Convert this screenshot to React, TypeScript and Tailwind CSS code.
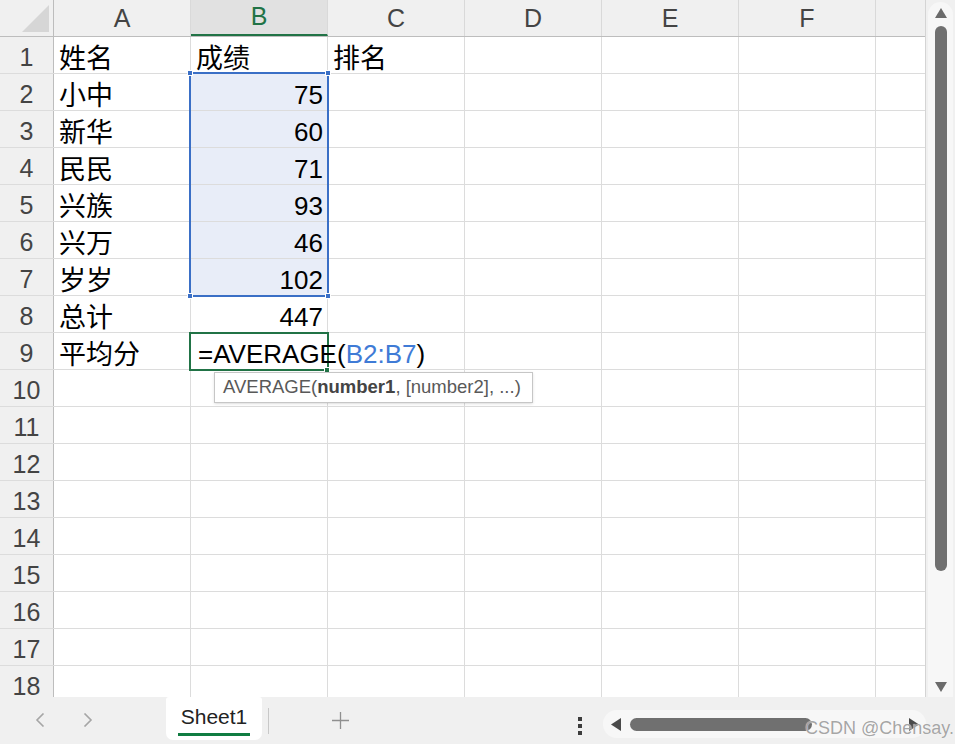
import React from 'react';

const FONT = "font-['Liberation_Sans','Noto_Sans_CJK_SC',sans-serif]";

type Row = [string, string, string];

const data: Row[] = [
  ['姓名', '成绩', '排名'],
  ['小中', '75', ''],
  ['新华', '60', ''],
  ['民民', '71', ''],
  ['兴族', '93', ''],
  ['兴万', '46', ''],
  ['岁岁', '102', ''],
  ['总计', '447', ''],
  ['平均分', '', ''],
];

const cols = ['A', 'B', 'C', 'D', 'E', 'F'];

const isNum = (s: string) => /^\d+$/.test(s);

const ColHeader = ({ label, active }: { label: string; active?: boolean }) => (
  <div
    className={`w-[137px] shrink-0 h-full flex items-end justify-center pb-[5px] leading-none text-[25px] border-r border-[#d9d9d9] ${
      active ? 'bg-[#e1e1e1] text-[#217346] border-b-2 border-b-[#217346]' : 'text-[#444]'
    }`}
  >
    {label}
  </div>
);

const Cell = ({ value, selected }: { value: string; selected?: boolean }) => (
  <div
    className={`w-[137px] shrink-0 h-full border-r border-[#dcdcdc] flex items-end leading-none text-black overflow-hidden ${
      isNum(value) ? 'justify-end pr-[4px] pb-[2px] text-[26px]' : 'pl-[5px] pb-0 text-[27px]'
    } ${selected ? 'bg-[#e8edf8]' : ''}`}
  >
    {value}
  </div>
);

const Grid = () => {
  const rows = Array.from({ length: 18 }, (_, i) => data[i] ?? ['', '', '']);
  return (
    <div className="relative w-[926px] h-full bg-white border-r border-[#d4d4d4] overflow-hidden">
      {/* column headers */}
      <div className="flex h-[37px] bg-[#f0f0f0] border-b border-[#bdbdbd]">
        <div className="w-[54px] shrink-0 h-full border-r border-[#bdbdbd] flex items-end justify-end">
          <svg width="30" height="30" viewBox="0 0 30 30" className="mb-[3px] mr-[3px]">
            <polygon points="29,2 29,29 2,29" fill="#d6d6d6" />
          </svg>
        </div>
        {cols.map((c) => (
          <ColHeader key={c} label={c} active={c === 'B'} />
        ))}
        <div className="flex-1 h-full" />
      </div>

      {/* rows */}
      {rows.map((r, i) => (
        <div key={i} className="flex h-[37px] border-b border-[#dcdcdc]">
          <div className="w-[54px] shrink-0 h-full bg-[#f0f0f0] border-r border-[#bdbdbd] flex items-end justify-center pb-[3px] leading-none text-[25px] text-[#444]">
            {i + 1}
          </div>
          <Cell value={r[0]} />
          {i === 8 ? (
            <div className="w-[137px] shrink-0 h-full border-r border-[#dcdcdc] flex items-end pb-[2px] pl-[7px] leading-none text-[26px] text-black">
              <span className="relative z-10 whitespace-nowrap">
                =AVERAGE(<span className="text-[#3f7bd6]">B2:B7</span>)
              </span>
            </div>
          ) : (
            <Cell value={r[1]} selected={i >= 1 && i <= 6} />
          )}
          <Cell value={r[2]} />
          <Cell value="" />
          <Cell value="" />
          <Cell value="" />
          <div className="flex-1 h-full" />
        </div>
      ))}

      {/* selection range B2:B7 */}
      <div className="absolute left-[189px] top-[72px] w-[140px] h-[225px] border-2 border-[#3a6fc6] pointer-events-none" />
      <div className="absolute left-[187px] top-[70px] w-[6px] h-[6px] bg-[#3a6fc6] border border-white" />
      <div className="absolute left-[325px] top-[70px] w-[6px] h-[6px] bg-[#3a6fc6] border border-white" />
      <div className="absolute left-[187px] top-[293px] w-[6px] h-[6px] bg-[#3a6fc6] border border-white" />
      <div className="absolute left-[325px] top-[293px] w-[6px] h-[6px] bg-[#3a6fc6] border border-white" />

      {/* active cell B9 */}
      <div className="absolute left-[189px] top-[332px] w-[140px] h-[39px] border-2 border-[#217346] pointer-events-none" />
      <div className="absolute left-[324px] top-[367px] w-[6px] h-[6px] bg-[#217346] border border-white" />

      {/* function tooltip */}
      <div className="absolute left-[214px] top-[372px] w-[319px] h-[31px] z-20 bg-white border border-[#c6c6c6] shadow-sm flex items-center pl-[8px] text-[18.5px] text-[#595959] leading-none whitespace-nowrap">
        AVERAGE(<b className="font-bold text-[#444]">number1</b>, [number2], ...)
      </div>
    </div>
  );
};

const VScroll = () => (
  <div className="flex-1 h-full flex justify-center pt-[2px]">
    <div className="w-[25px] h-full bg-[#f7f7f7] rounded-t-full flex flex-col items-center">
      <svg width="12" height="10" viewBox="0 0 12 10" className="mt-[6px]">
        <polygon points="6,0 12,10 0,10" fill="#6b6b6b" />
      </svg>
      <div className="w-[12px] h-[545px] mt-[8px] bg-[#707070] rounded-full" />
      <div className="flex-1" />
      <svg width="12" height="10" viewBox="0 0 12 10" className="mb-[5px]">
        <polygon points="0,0 12,0 6,10" fill="#6b6b6b" />
      </svg>
    </div>
  </div>
);

const BottomBar = () => (
  <div className="relative h-[47px] flex items-start pl-[35px]">
    <svg width="10" height="14" viewBox="0 0 10 14" className="mt-[16px]">
      <polyline points="8.5,0.5 2,7 8.5,13.5" fill="none" stroke="#a6a6a6" strokeWidth="1.6" />
    </svg>
    <svg width="10" height="14" viewBox="0 0 10 14" className="mt-[16px] ml-[38px]">
      <polyline points="1.5,0.5 8,7 1.5,13.5" fill="none" stroke="#a6a6a6" strokeWidth="1.6" />
    </svg>

    <div className="ml-[73px] w-[96px] h-[43px] bg-white rounded-b-[7px] rounded-t-[3px] flex flex-col items-center">
      <span className="mt-[9px] text-[21px] leading-none text-[#222]">Sheet1</span>
      <div className="mt-[6px] w-[72px] h-[3px] bg-[#107c41]" />
    </div>

    <div className="ml-[6px] mt-[11px] w-px h-[26px] bg-[#c8c8c8]" />

    <svg width="17" height="17" viewBox="0 0 17 17" className="ml-[63px] mt-[15px]">
      <path d="M8.5 0v17M0 8.5h17" stroke="#8f8f8f" strokeWidth="1.3" />
    </svg>

    <div className="ml-[229px] mt-[20px] w-[4px] flex flex-col gap-[3px]">
      <div className="w-[4px] h-[4px] bg-[#3c3c3c]" />
      <div className="w-[4px] h-[4px] bg-[#3c3c3c]" />
      <div className="w-[4px] h-[4px] bg-[#3c3c3c]" />
    </div>

    <div className="ml-[21px] mt-[13px] w-[323px] h-[28px] bg-[#f7f7f7] rounded-full flex items-center pl-[8px]">
      <svg width="10" height="13" viewBox="0 0 10 13">
        <polygon points="10,0 10,13 0,6.5" fill="#4a4a4a" />
      </svg>
      <div className="ml-[9px] w-[182px] h-[13px] bg-[#707070] rounded-full" />
      <div className="flex-1" />
      <svg width="10" height="13" viewBox="0 0 10 13" className="mr-[7px]">
        <polygon points="0,0 10,6.5 0,13" fill="#4a4a4a" />
      </svg>
    </div>

    <span className="absolute right-[1px] top-[22px] text-[18px] leading-none text-[#9a9a9a]/90 font-['Liberation_Sans',sans-serif] [text-shadow:0_0_1px_#fff]">
      CSDN @Chensay.
    </span>
  </div>
);

export default function App() {
  return (
    <div className={`w-[955px] h-[744px] bg-[#f0f0f0] flex flex-col overflow-hidden ${FONT}`}>
      <div className="flex h-[697px]">
        <Grid />
        <VScroll />
      </div>
      <BottomBar />
    </div>
  );
}
